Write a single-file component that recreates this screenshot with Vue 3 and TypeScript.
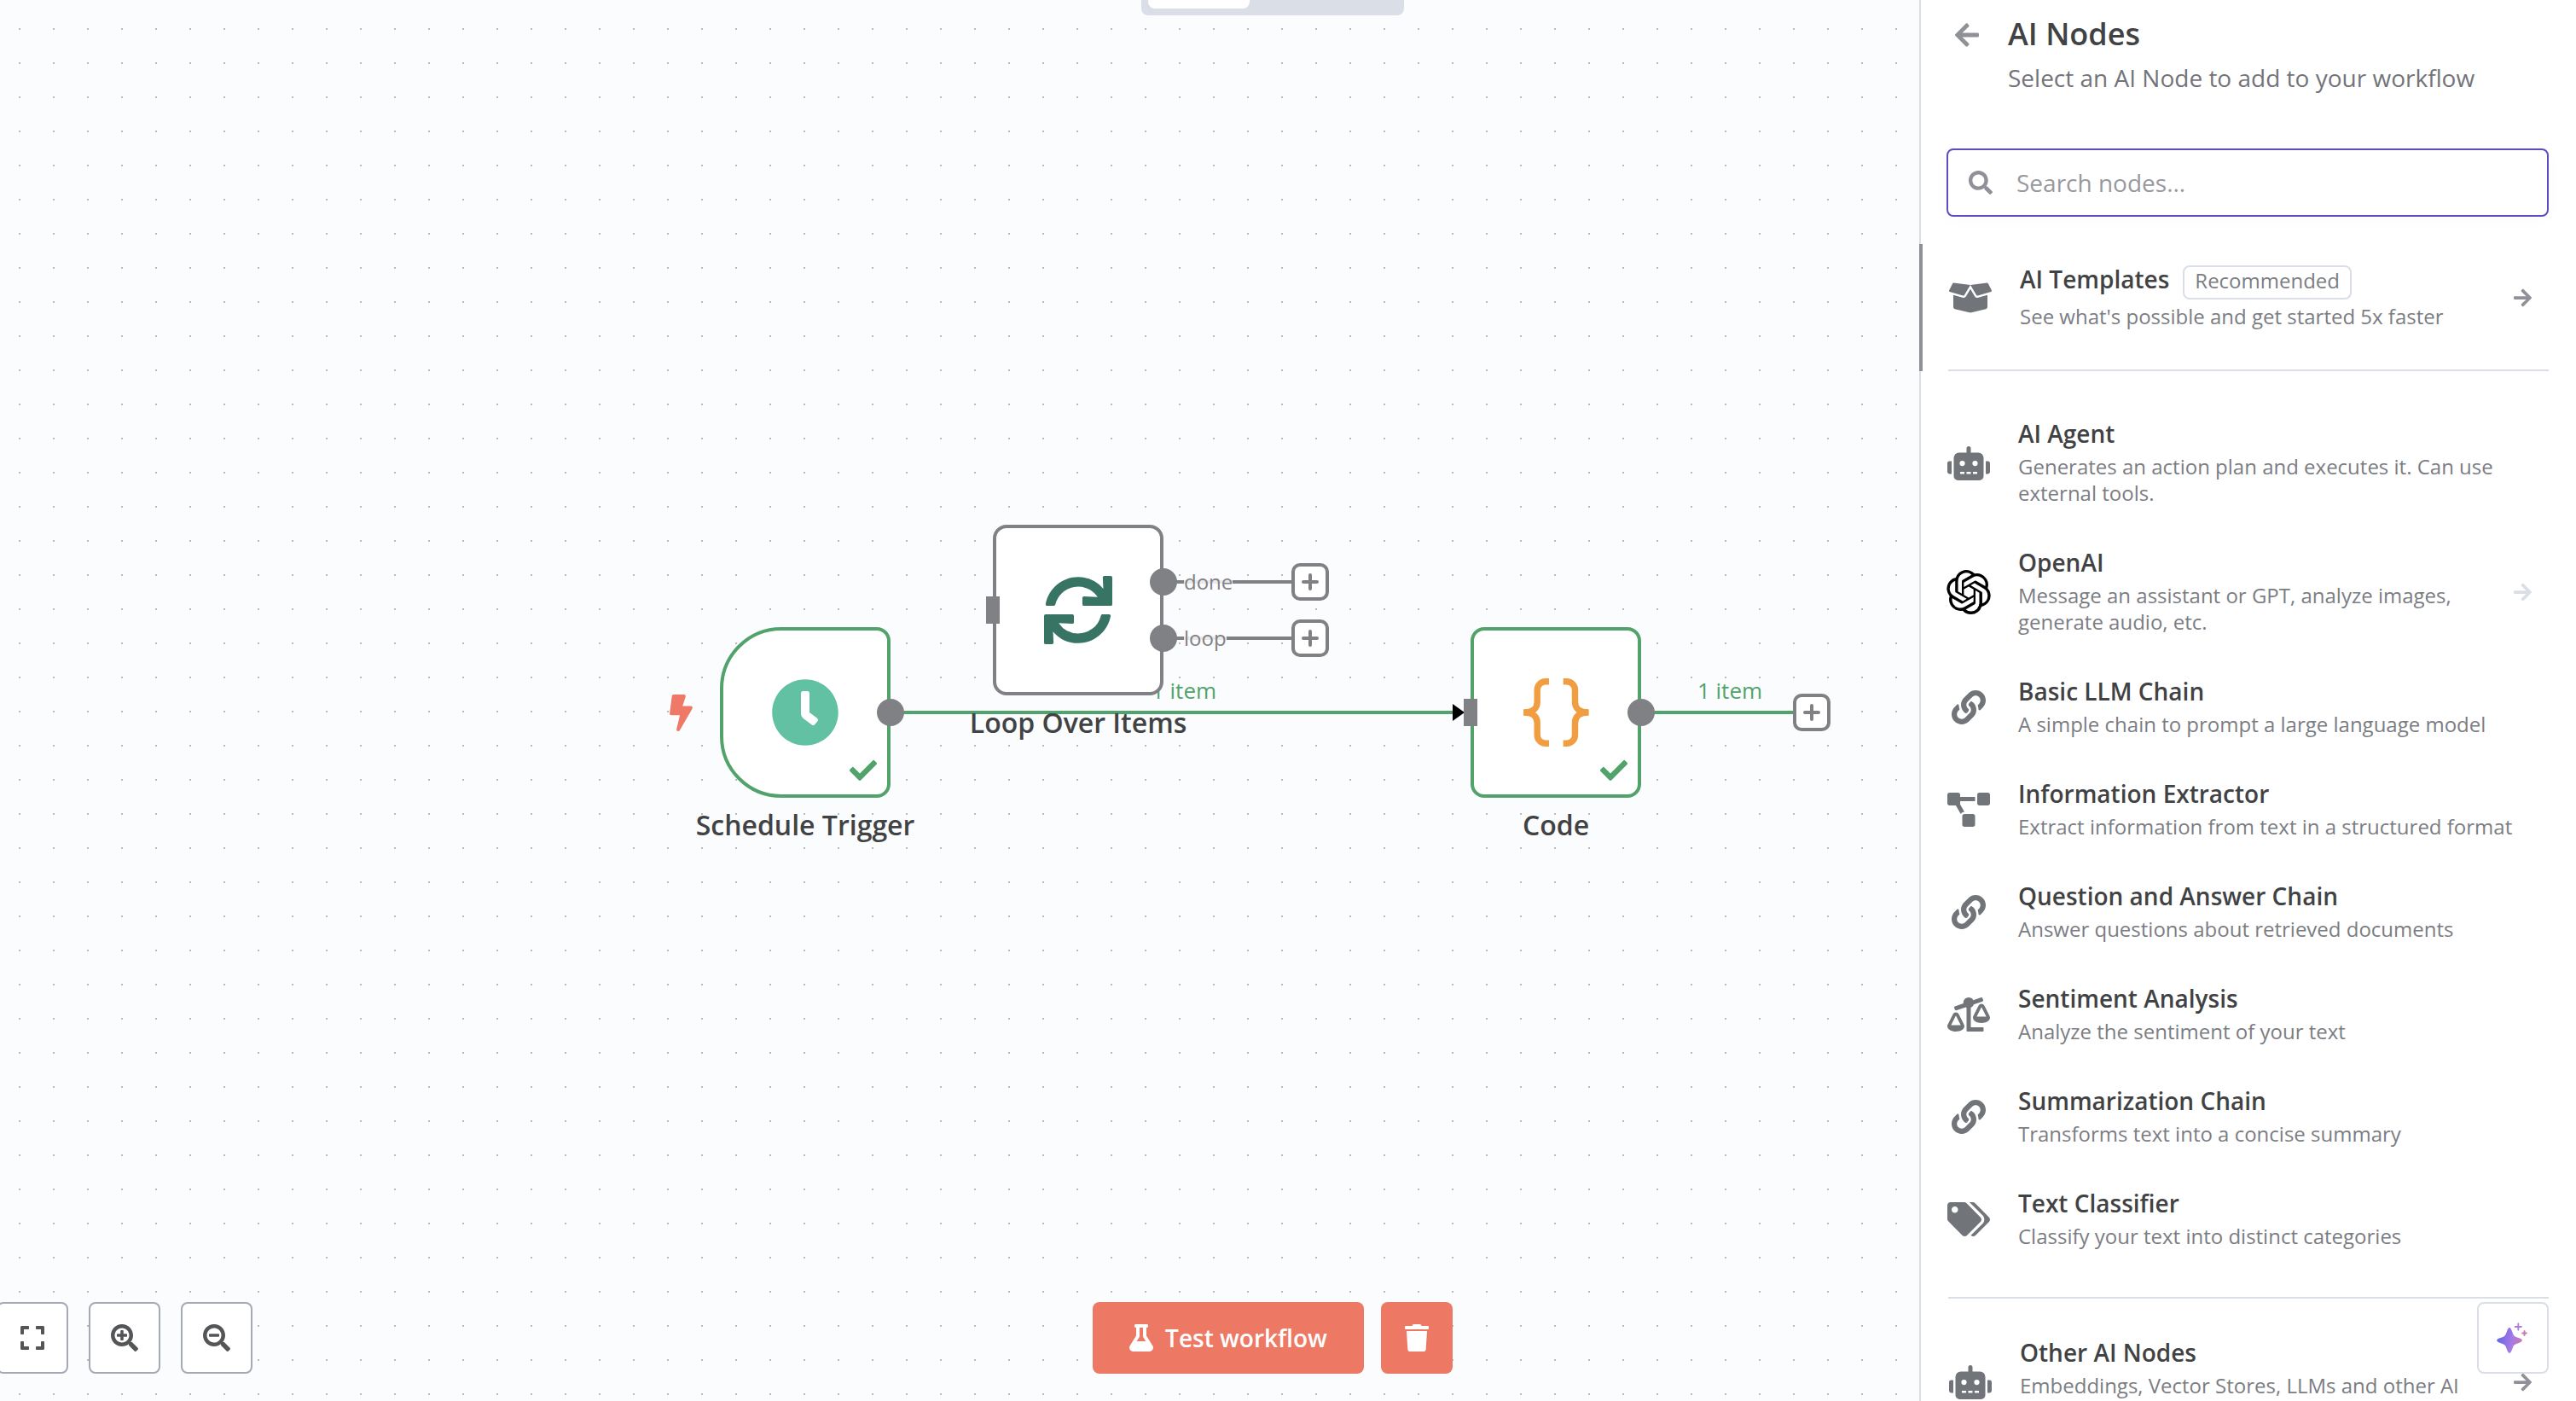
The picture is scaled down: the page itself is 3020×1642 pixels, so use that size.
<script setup lang="ts">
import { ref } from 'vue'

interface Glyph {
  box: string
  d: string
}

interface NodeItem {
  name: string
  text: string
  icon: string
  arrow?: boolean
}

interface FlowNode {
  name: string
  icon: string
  x: number
  y: number
  done: boolean
  trigger?: boolean
  input?: boolean
  outputs: number[]
}

interface AddButton {
  x: number
  y: number
  title: string
}

const glyphs: Record<string, Glyph> = {
  sync: {
    box: '0 0 512 512',
    d: 'M440.65 12.57l4 82.77A247.16 247.16 0 0 0 255.83 8C134.73 8 33.91 94.92 12.29 209.82A12 12 0 0 0 24.09 224h49.05a12 12 0 0 0 11.67-9.26 175.91 175.91 0 0 1 317-56.94l-101.46-4.86a12 12 0 0 0-12.57 12v47.41a12 12 0 0 0 12 12H500a12 12 0 0 0 12-12V12a12 12 0 0 0-12-12h-47.37a12 12 0 0 0-11.98 12.57zM255.83 432a175.61 175.61 0 0 1-146-77.8l101.8 4.87a12 12 0 0 0 12.57-12v-47.4a12 12 0 0 0-12-12H12a12 12 0 0 0-12 12V500a12 12 0 0 0 12 12h47.35a12 12 0 0 0 12-12.6l-4.15-82.57A247.17 247.17 0 0 0 255.83 504c121.11 0 221.93-86.92 243.55-201.82a12 12 0 0 0-11.8-14.18h-49.05a12 12 0 0 0-11.67 9.26A175.86 175.86 0 0 1 255.83 432z',
  },
  clock: {
    box: '0 0 512 512',
    d: 'M256,8C119,8,8,119,8,256S119,504,256,504,504,393,504,256,393,8,256,8Zm92.49,313h0l-20,25a16,16,0,0,1-22.49,2.5h0l-67-49.72a40,40,0,0,1-15-31.23V112a16,16,0,0,1,16-16h32a16,16,0,0,1,16,16V256l58,42.5A16,16,0,0,1,348.49,321Z',
  },
  check: {
    box: '0 0 512 512',
    d: 'M173.898 439.404l-166.4-166.4c-9.997-9.997-9.997-26.206 0-36.204l36.203-36.204c9.997-9.998 26.207-9.998 36.204 0L192 312.69 432.095 72.596c9.997-9.997 26.207-9.997 36.204 0l36.203 36.204c9.997 9.997 9.997 26.206 0 36.204l-294.4 294.401c-9.998 9.997-26.207 9.997-36.204-.001z',
  },
  bolt: {
    box: '0 0 320 512',
    d: 'M296 160H180.6l42.6-129.8C227.2 15 215.7 0 200 0H56C44 0 33.8 8.9 32.2 20.8l-32 240C-1.7 275.2 9.5 288 24 288h118.7L96.6 482.5c-3.6 15.2 8 29.5 23.3 29.5 8.4 0 16.4-4.4 20.8-12l176-304c9.3-15.9-2.2-36-20.7-36z',
  },
  search: {
    box: '0 0 512 512',
    d: 'M505 442.7L405.3 343c-4.5-4.5-10.6-7-17-7H372c27.6-35.3 44-79.7 44-128C416 93.1 322.9 0 208 0S0 93.1 0 208s93.1 208 208 208c48.3 0 92.7-16.4 128-44v16.3c0 6.4 2.5 12.5 7 17l99.7 99.7c9.4 9.4 24.6 9.4 33.9 0l28.3-28.3c9.4-9.4 9.4-24.6.1-34zM208 336c-70.7 0-128-57.2-128-128 0-70.7 57.2-128 128-128 70.7 0 128 57.2 128 128 0 70.7-57.2 128-128 128z',
  },
  zoomIn: {
    box: '0 0 512 512',
    d: 'M304 192v32c0 6.6-5.4 12-12 12h-56v56c0 6.6-5.4 12-12 12h-32c-6.6 0-12-5.4-12-12v-56h-56c-6.6 0-12-5.4-12-12v-32c0-6.6 5.4-12 12-12h56v-56c0-6.6 5.4-12 12-12h32c6.6 0 12 5.4 12 12v56h56c6.6 0 12 5.4 12 12zm201 284.7L476.7 505c-9.4 9.4-24.6 9.4-33.9 0L343 405.3c-4.5-4.5-7-10.6-7-17V372c-35.3 27.6-79.7 44-128 44C93.1 416 0 322.9 0 208S93.1 0 208 0s208 93.1 208 208c0 48.3-16.4 92.7-44 128h16.3c6.4 0 12.5 2.5 17 7l99.7 99.7c9.3 9.4 9.3 24.6 0 34zM344 208c0-75.2-60.8-136-136-136S72 132.8 72 208s60.8 136 136 136 136-60.8 136-136z',
  },
  zoomOut: {
    box: '0 0 512 512',
    d: 'M304 192v32c0 6.6-5.4 12-12 12H124c-6.6 0-12-5.4-12-12v-32c0-6.6 5.4-12 12-12h168c6.6 0 12 5.4 12 12zm201 284.7L476.7 505c-9.4 9.4-24.6 9.4-33.9 0L343 405.3c-4.5-4.5-7-10.6-7-17V372c-35.3 27.6-79.7 44-128 44C93.1 416 0 322.9 0 208S93.1 0 208 0s208 93.1 208 208c0 48.3-16.4 92.7-44 128h16.3c6.4 0 12.5 2.5 17 7l99.7 99.7c9.3 9.4 9.3 24.6 0 34zM344 208c0-75.2-60.8-136-136-136S72 132.8 72 208s60.8 136 136 136 136-60.8 136-136z',
  },
  expand: {
    box: '0 0 448 512',
    d: 'M0 180V56c0-13.3 10.7-24 24-24h124c6.6 0 12 5.4 12 12v40c0 6.6-5.4 12-12 12H64v84c0 6.6-5.4 12-12 12H12c-6.6 0-12-5.4-12-12zM288 44v40c0 6.6 5.4 12 12 12h84v84c0 6.6 5.4 12 12 12h40c6.6 0 12-5.4 12-12V56c0-13.3-10.7-24-24-24H300c-6.6 0-12 5.4-12 12zm148 276h-40c-6.6 0-12 5.4-12 12v84h-84c-6.6 0-12 5.4-12 12v40c0 6.6 5.4 12 12 12h124c13.3 0 24-10.7 24-24V332c0-6.6-5.4-12-12-12zM160 468v-40c0-6.6-5.4-12-12-12H64v-84c0-6.6-5.4-12-12-12H12c-6.6 0-12 5.4-12 12v124c0 13.3 10.7 24 24 24h124c6.6 0 12-5.4 12-12z',
  },
  flask: {
    box: '0 0 448 512',
    d: 'M437.2 403.5L320 215V64h8c13.3 0 24-10.7 24-24V24c0-13.3-10.7-24-24-24H120c-13.3 0-24 10.7-24 24v16c0 13.3 10.7 24 24 24h8v151L10.8 403.5C-18.5 450.6 15.3 512 70.9 512h306.2c55.7 0 89.4-61.5 60.1-108.5zM137.9 320l48.2-77.6c3.7-5.2 5.8-11.6 5.8-18.4V64h64v160c0 6.9 2.2 13.2 5.8 18.4l48.2 77.6h-172z',
  },
  trash: {
    box: '0 0 448 512',
    d: 'M432 32H312l-9.4-18.7A24 24 0 0 0 281.1 0H166.8a23.72 23.72 0 0 0-21.4 13.3L136 32H16A16 16 0 0 0 0 48v32a16 16 0 0 0 16 16h416a16 16 0 0 0 16-16V48a16 16 0 0 0-16-16zM53.2 467a48 48 0 0 0 47.9 45h245.8a48 48 0 0 0 47.9-45L416 128H32z',
  },
  arrowLeft: {
    box: '0 0 448 512',
    d: 'M257.5 445.1l-22.2 22.2c-9.4 9.4-24.6 9.4-33.9 0L7 273c-9.4-9.4-9.4-24.6 0-33.9L201.4 44.7c9.4-9.4 24.6-9.4 33.9 0l22.2 22.2c9.5 9.5 9.3 25-.4 34.3L136.6 216H424c13.3 0 24 10.7 24 24v32c0 13.3-10.7 24-24 24H136.6l120.5 114.8c9.8 9.3 10 24.8.4 34.3z',
  },
  arrowRight: {
    box: '0 0 448 512',
    d: 'M190.5 66.9l22.2-22.2c9.4-9.4 24.6-9.4 33.9 0L441 239c9.4 9.4 9.4 24.6 0 33.9L246.6 467.3c-9.4 9.4-24.6 9.4-33.9 0l-22.2-22.2c-9.5-9.5-9.3-25 .4-34.3L311.4 296H24c-13.3 0-24-10.7-24-24v-32c0-13.3 10.7-24 24-24h287.4L190.9 101.2c-9.8-9.3-10-24.8-.4-34.3z',
  },
  link: {
    box: '0 0 512 512',
    d: 'M326.612 185.391c59.747 59.809 58.927 155.698.36 214.59-.11.12-.24.25-.36.37l-67.2 67.2c-59.27 59.27-155.699 59.262-214.96 0-59.27-59.26-59.27-155.7 0-214.96l37.106-37.106c9.84-9.84 26.786-3.3 27.294 10.606.648 17.722 3.826 35.527 9.69 52.721 1.986 5.822.567 12.262-3.783 16.612l-13.087 13.087c-28.026 28.026-28.905 73.66-1.155 101.96 28.024 28.579 74.086 28.749 102.325.51l67.2-67.19c28.191-28.191 28.073-73.757 0-101.83-3.701-3.694-7.429-6.564-10.341-8.569a16.037 16.037 0 0 1-6.947-12.606c-.396-10.567 3.348-21.456 11.698-29.806l21.054-21.055c5.521-5.521 14.182-6.199 20.584-1.731a152.482 152.482 0 0 1 20.522 17.197zM467.547 44.449c-59.261-59.262-155.69-59.27-214.96 0l-67.2 67.2c-.12.12-.25.25-.36.37-58.566 58.892-59.387 154.781.36 214.59a152.454 152.454 0 0 0 20.521 17.196c6.402 4.468 15.064 3.789 20.584-1.731l21.054-21.055c8.35-8.35 12.094-19.239 11.698-29.806a16.037 16.037 0 0 0-6.947-12.606c-2.912-2.005-6.64-4.875-10.341-8.569-28.073-28.073-28.191-73.639 0-101.83l67.2-67.19c28.239-28.239 74.3-28.069 102.325.51 27.75 28.3 26.872 73.934-1.155 101.96l-13.087 13.087c-4.35 4.35-5.769 10.79-3.783 16.612 5.864 17.194 9.042 34.999 9.69 52.721.509 13.906 17.454 20.446 27.294 10.606l37.106-37.106c59.271-59.259 59.271-155.699.001-214.959z',
  },
  diagram: {
    box: '0 0 640 512',
    d: 'M384 320H256c-17.67 0-32 14.33-32 32v128c0 17.67 14.33 32 32 32h128c17.67 0 32-14.33 32-32V352c0-17.67-14.33-32-32-32zM192 32c0-17.67-14.33-32-32-32H32C14.33 0 0 14.33 0 32v128c0 17.67 14.33 32 32 32h95.72l73.16 128.04C211.98 300.98 232.4 288 256 288h.28L192 175.51V128h224V64H192V32zM608 0H480c-17.67 0-32 14.33-32 32v128c0 17.67 14.33 32 32 32h128c17.67 0 32-14.33 32-32V32c0-17.67-14.33-32-32-32z',
  },
  tags: {
    box: '0 0 640 512',
    d: 'M497.941 225.941L286.059 14.059A48 48 0 0 0 252.118 0H48C21.49 0 0 21.49 0 48v204.118a48 48 0 0 0 14.059 33.941l211.882 211.882c18.744 18.745 49.136 18.746 67.882 0l204.118-204.118c18.745-18.745 18.745-49.137 0-67.882zM112 160c-26.51 0-48-21.49-48-48s21.49-48 48-48 48 21.49 48 48-21.49 48-48 48zm513.941 133.823L421.823 497.941c-18.745 18.745-49.137 18.745-67.882 0l-.36-.36L527.64 323.522c16.999-16.999 26.362-39.609 26.362-63.64s-9.363-46.641-26.362-63.64L331.397 0h48.721a48 48 0 0 1 33.941 14.059l211.882 211.882c18.745 18.745 18.745 49.137 0 67.882z',
  },
  scale: {
    box: '0 0 640 512',
    d: 'M528 448H352V153.25c20.42-8.94 36.1-26.22 43.38-47.47l132-44.26c8.38-2.81 12.89-11.88 10.08-20.26l-10.17-30.34C524.48 2.54 515.41-1.97 507.03.84L389.11 40.37C375.3 16.36 349.69 0 320 0c-44.18 0-80 35.82-80 80 0 3.43.59 6.71 1.01 10.03l-128.39 43.05c-8.38 2.81-12.89 11.88-10.08 20.26l10.17 30.34c2.81 8.38 11.88 12.89 20.26 10.08l142.05-47.63c4.07 2.77 8.43 5.12 12.99 7.12V496c0 8.84 7.16 16 16 16h224c8.84 0 16-7.16 16-16v-32c-.01-8.84-7.17-16-16.01-16zm111.98-144c0-16.18 1.34-8.73-85.05-181.51-17.65-35.29-68.19-35.36-85.87 0-87.12 174.26-85.04 165.84-85.04 181.51H384c0 44.18 57.3 80 128 80s128-35.82 128-80h-.02zM440 288l72-144 72 144H440zm-269.07-37.51c-17.65-35.29-68.19-35.36-85.87 0C-2.06 424.75.02 416.33.02 432H0c0 44.18 57.3 80 128 80s128-35.82 128-80h-.02c0-16.18 1.34-8.73-85.05-181.51zM56 416l72-144 72 144H56z',
  },
  robot: {
    box: '0 0 640 512',
    d: 'M32,224H64V416H32A31.96166,31.96166,0,0,1,0,384V256A31.96166,31.96166,0,0,1,32,224Zm512-48V448a64.06328,64.06328,0,0,1-64,64H160a64.06328,64.06328,0,0,1-64-64V176a79.974,79.974,0,0,1,80-80H288V32a32,32,0,0,1,64,0V96H464A79.974,79.974,0,0,1,544,176ZM264,256a40,40,0,1,0-40,40A39.997,39.997,0,0,0,264,256Zm-8,128H192v32h64Zm96,0H288v32h64ZM456,256a40,40,0,1,0-40,40A39.997,39.997,0,0,0,456,256Zm-8,128H384v32h64ZM640,256V384a31.96166,31.96166,0,0,1-32,32H576V224h32A31.96166,31.96166,0,0,1,640,256Z',
  },
  boxOpen: {
    box: '0 0 640 512',
    d: 'M425.7 256c-16.9 0-32.8-9-41.4-23.4L320 126l-64.2 106.6c-8.7 14.5-24.6 23.5-41.5 23.5-4.5 0-9-.6-13.3-1.9L64 215v178c0 14.7 10 27.5 24.2 31l216.2 54.1c10.2 2.5 20.9 2.5 31 0L551.8 424c14.2-3.6 24.2-16.4 24.2-31V215l-137 39.1c-4.3 1.3-8.8 1.9-13.3 1.9zm212.6-112.2L586.8 41c-3.1-6.2-9.8-9.8-16.7-8.9L320 64l91.7 152.1c3.8 6.3 11.4 9.3 18.5 7.3l197.9-56.5c9.9-2.9 14.7-13.9 10.2-23.1zM53.2 41L1.7 143.8c-4.6 9.2.3 20.2 10.1 23l197.9 56.5c7.1 2 14.7-1 18.5-7.3L320 64 69.8 32.1c-6.9-.8-13.5 2.7-16.6 8.9z',
  },
  openai: {
    box: '0 0 24 24',
    d: 'M22.2819 9.8211a5.9847 5.9847 0 0 0-.5157-4.9108 6.0462 6.0462 0 0 0-6.5098-2.9A6.0651 6.0651 0 0 0 4.9807 4.1818a5.9847 5.9847 0 0 0-3.9977 2.9 6.0462 6.0462 0 0 0 .7427 7.0966 5.98 5.98 0 0 0 .511 4.9107 6.051 6.051 0 0 0 6.5146 2.9001A5.9847 5.9847 0 0 0 13.2599 24a6.0557 6.0557 0 0 0 5.7718-4.2058 5.9894 5.9894 0 0 0 3.9977-2.9001 6.0557 6.0557 0 0 0-.7475-7.0729zm-9.022 12.6081a4.4755 4.4755 0 0 1-2.8764-1.0408l.1419-.0804 4.7783-2.7582a.7948.7948 0 0 0 .3927-.6813v-6.7369l2.02 1.1686a.071.071 0 0 1 .038.052v5.5826a4.504 4.504 0 0 1-4.4945 4.4944zm-9.6607-4.1254a4.4708 4.4708 0 0 1-.5346-3.0137l.142.0852 4.783 2.7582a.7712.7712 0 0 0 .7806 0l5.8428-3.3685v2.3324a.0804.0804 0 0 1-.0332.0615L9.74 19.9502a4.4992 4.4992 0 0 1-6.1408-1.6464zM2.3408 7.8956a4.485 4.485 0 0 1 2.3655-1.9728V11.6a.7664.7664 0 0 0 .3879.6765l5.8144 3.3543-2.0201 1.1685a.0757.0757 0 0 1-.071 0l-4.8303-2.7865A4.504 4.504 0 0 1 2.3408 7.872zm16.5963 3.8558L13.1038 8.364 15.1192 7.2a.0757.0757 0 0 1 .071 0l4.8303 2.7913a4.4944 4.4944 0 0 1-.6765 8.1042v-5.6772a.79.79 0 0 0-.407-.667zm2.0107-3.0231l-.142-.0852-4.7735-2.7818a.7759.7759 0 0 0-.7854 0L9.409 9.2297V6.8974a.0662.0662 0 0 1 .0284-.0615l4.8303-2.7866a4.4992 4.4992 0 0 1 6.6802 4.66zM8.3065 12.863l-2.02-1.1638a.0804.0804 0 0 1-.038-.0567V6.0742a4.4992 4.4992 0 0 1 7.3757-3.4537l-.142.0805L8.704 5.459a.7948.7948 0 0 0-.3927.6813zm1.0976-2.3654l2.602-1.4998 2.6069 1.4998v2.9994l-2.5974 1.4997-2.6067-1.4997Z',
  },
}

const query = ref('')

const items: NodeItem[] = [
  { name: 'AI Agent', text: 'Generates an action plan and executes it. Can use external tools.', icon: 'robot' },
  { name: 'OpenAI', text: 'Message an assistant or GPT, analyze images, generate audio, etc.', icon: 'openai', arrow: true },
  { name: 'Basic LLM Chain', text: 'A simple chain to prompt a large language model', icon: 'link' },
  { name: 'Information Extractor', text: 'Extract information from text in a structured format', icon: 'diagram' },
  { name: 'Question and Answer Chain', text: 'Answer questions about retrieved documents', icon: 'link' },
  { name: 'Sentiment Analysis', text: 'Analyze the sentiment of your text', icon: 'scale' },
  { name: 'Summarization Chain', text: 'Transforms text into a concise summary', icon: 'link' },
  { name: 'Text Classifier', text: 'Classify your text into distinct categories', icon: 'tags' },
]

const nodes: FlowNode[] = [
  { name: 'Schedule Trigger', icon: 'clock', x: 844, y: 735, done: true, trigger: true, outputs: [100] },
  { name: 'Loop Over Items', icon: 'sync', x: 1164, y: 615, done: false, input: true, outputs: [67, 133] },
  { name: 'Code', icon: 'braces', x: 1724, y: 735, done: true, input: true, outputs: [100] },
]

const addButtons: AddButton[] = [
  { x: 1514, y: 660, title: 'Add node after done' },
  { x: 1514, y: 726, title: 'Add node after loop' },
  { x: 2102, y: 813, title: 'Add node after Code' },
]

const outputLabels = [
  { text: 'done', x: 1388, y: 682 },
  { text: 'loop', x: 1388, y: 748 },
]

const edgeLabels = [
  { text: '1 item', x: 1388, y: 809 },
  { text: '1 item', x: 2028, y: 809 },
]

const zoomControls = [
  { icon: 'expand', title: 'Fit to view' },
  { icon: 'zoomIn', title: 'Zoom in' },
  { icon: 'zoomOut', title: 'Zoom out' },
]

const at = (x: number, y: number) => ({ left: `${x}px`, top: `${y}px` })
</script>

<template>
  <div class="editor">
    <main class="canvas">
      <div class="tabs"><span class="tab-active"></span></div>

      <svg class="edges" aria-hidden="true">
        <g fill="none" stroke-width="4">
          <path class="edge-ok" d="M1044 835H1706" />
          <path class="edge-ok" d="M1924 835H2104" />
          <path class="edge-idle" d="M1364 682H1516" />
          <path class="edge-idle" d="M1364 748H1516" />
        </g>
        <path d="M1703 825L1717 835L1703 845Z" />
      </svg>

      <span v-for="l in edgeLabels" :key="l.x" class="edge-label" :style="at(l.x, l.y)">{{ l.text }}</span>
      <span v-for="l in outputLabels" :key="l.text" class="output-label" :style="at(l.x, l.y)">{{ l.text }}</span>

      <svg class="bolt" :viewBox="glyphs.bolt.box" aria-hidden="true"><path :d="glyphs.bolt.d" /></svg>

      <div v-for="n in nodes" :key="n.name" class="node" :style="at(n.x, n.y)">
        <div class="node-box" :class="{ done: n.done, trigger: n.trigger }">
          <svg v-if="n.icon === 'braces'" class="node-icon braces" viewBox="0 0 80 80" aria-hidden="true">
            <g id="brace">
              <path d="M32 3.8H28A9.7 9.7 0 0 0 18.2 13.5V28C18.2 35 13 40 3 40C13 40 18.2 45 18.2 52V66.5A9.7 9.7 0 0 0 28 76.2H32" />
              <path d="M2 40H10" />
            </g>
            <use href="#brace" transform="translate(80.7 0) scale(-1 1)" />
          </svg>
          <svg v-else class="node-icon" :class="n.icon" :viewBox="glyphs[n.icon].box" aria-hidden="true">
            <path :d="glyphs[n.icon].d" />
          </svg>
          <svg v-if="n.done" class="node-check" :viewBox="glyphs.check.box" aria-hidden="true">
            <path :d="glyphs.check.d" />
          </svg>
          <span v-if="n.input" class="port-in"></span>
          <span v-for="o in n.outputs" :key="o" class="port-out" :style="{ top: `${o}px` }"></span>
        </div>
        <div class="node-name">{{ n.name }}</div>
      </div>

      <button v-for="b in addButtons" :key="b.title" class="add" type="button" :aria-label="b.title" :style="at(b.x, b.y)">
        <svg viewBox="0 0 20 20" aria-hidden="true"><path d="M10 2V18M2 10H18" /></svg>
      </button>

      <div class="zoom-bar">
        <button v-for="z in zoomControls" :key="z.icon" class="square" type="button" :aria-label="z.title">
          <svg class="ctl-icon" :viewBox="glyphs[z.icon].box" aria-hidden="true"><path :d="glyphs[z.icon].d" /></svg>
        </button>
      </div>
    </main>

    <aside class="panel">
      <header class="head">
        <button class="back" type="button" aria-label="Back">
          <svg :viewBox="glyphs.arrowLeft.box" aria-hidden="true"><path :d="glyphs.arrowLeft.d" /></svg>
        </button>
        <div>
          <h1>AI Nodes</h1>
          <p>Select an AI Node to add to your workflow</p>
        </div>
      </header>

      <label class="search">
        <svg :viewBox="glyphs.search.box" aria-hidden="true"><path :d="glyphs.search.d" /></svg>
        <input v-model="query" type="text" placeholder="Search nodes..." aria-label="Search nodes" />
      </label>

      <section class="link-row active">
        <a class="item" href="#templates">
          <span class="item-icon">
            <svg :viewBox="glyphs.boxOpen.box" aria-hidden="true"><path :d="glyphs.boxOpen.d" /></svg>
          </span>
          <span class="item-text">
            <span class="title-row">
              <span class="item-title">AI Templates</span>
              <span class="badge">Recommended</span>
            </span>
            <span class="item-desc">See what's possible and get started 5x faster</span>
          </span>
          <svg class="arrow" :viewBox="glyphs.arrowRight.box" aria-hidden="true"><path :d="glyphs.arrowRight.d" /></svg>
        </a>
      </section>

      <section class="list">
        <a v-for="i in items" :key="i.name" class="item" href="#node">
          <span class="item-icon">
            <svg :class="i.icon" :viewBox="glyphs[i.icon].box" aria-hidden="true"><path :d="glyphs[i.icon].d" /></svg>
          </span>
          <span class="item-text">
            <span class="item-title">{{ i.name }}</span>
            <span class="item-desc">{{ i.text }}</span>
          </span>
          <svg v-if="i.arrow" class="arrow faint" :viewBox="glyphs.arrowRight.box" aria-hidden="true">
            <path :d="glyphs.arrowRight.d" />
          </svg>
        </a>
      </section>

      <section class="link-row other">
        <a class="item" href="#other">
          <span class="item-icon">
            <svg :viewBox="glyphs.robot.box" aria-hidden="true"><path :d="glyphs.robot.d" /></svg>
          </span>
          <span class="item-text">
            <span class="item-title">Other AI Nodes</span>
            <span class="item-desc">Embeddings, Vector Stores, LLMs and other AI nodes</span>
          </span>
          <svg class="arrow" :viewBox="glyphs.arrowRight.box" aria-hidden="true"><path :d="glyphs.arrowRight.d" /></svg>
        </a>
      </section>
    </aside>

    <div class="run-bar">
      <button class="primary" type="button">
        <svg class="ctl-icon" :viewBox="glyphs.flask.box" aria-hidden="true"><path :d="glyphs.flask.d" /></svg>
        Test workflow
      </button>
      <button class="primary icon-only" type="button" aria-label="Clear execution data">
        <svg class="ctl-icon" :viewBox="glyphs.trash.box" aria-hidden="true"><path :d="glyphs.trash.d" /></svg>
      </button>
    </div>

    <button class="assistant" type="button" aria-label="AI assistant">
      <svg viewBox="0 0 40 40" aria-hidden="true">
        <defs>
          <linearGradient id="spark" gradientUnits="userSpaceOnUse" x1="1" y1="20" x2="38" y2="28">
            <stop offset="0" stop-color="#6366e4" />
            <stop offset="0.5" stop-color="#a87be6" />
            <stop offset="1" stop-color="#e0788c" />
          </linearGradient>
        </defs>
        <g fill="url(#spark)">
          <path d="M13.8 10.2Q16 6 18.2 10.2L20.4 16Q21.2 17.9 23 18.7L28.8 20.8Q33 23 28.8 25.2L23 27.4Q21.2 28.1 20.4 30L18.2 35.8Q16 40 13.8 35.8L11.6 30Q10.8 28.1 9 27.4L3.2 25.2Q-1 23 3.2 20.8L9 18.7Q10.8 17.9 11.6 16Z" />
          <path d="M25.4 3Q26.3 1.6 27.2 3V6H30.2Q31.8 7 30.2 7.9H27.2V11Q26.3 12.4 25.4 11V7.9H22.4Q20.8 7 22.4 6H25.4Z" />
          <path d="M32.5 11.8Q33.5 10.2 34.5 11.8V13.5H36.2Q37.8 14.5 36.2 15.5H34.5V17.2Q33.5 18.8 32.5 17.2V15.5H30.8Q29.2 14.5 30.8 13.5H32.5Z" />
        </g>
      </svg>
    </button>
  </div>
</template>

<style>
html,
body,
#app {
  height: 100%;
}

body {
  margin: 0;
}
</style>

<style scoped>
* {
  box-sizing: border-box;
}

.editor {
  position: relative;
  display: flex;
  height: 100%;
  overflow: hidden;
  background: #fbfcfe;
  color: #414244;
  font-family: 'Open Sans', 'Noto Sans', sans-serif;
}

button {
  display: flex;
  align-items: center;
  justify-content: center;
  margin: 0;
  padding: 0;
  font: inherit;
  cursor: pointer;
}

svg {
  display: block;
  fill: currentColor;
}

/* Canvas with a dot every 40px */
.canvas {
  position: relative;
  flex: 1;
  min-width: 0;
  overflow: hidden;
  background:
    linear-gradient(to right, transparent 2px, #fbfcfe 2px) 22px 33px / 40px 40px,
    linear-gradient(to bottom, #b9babc 2px, #fbfcfe 2px) 22px 33px / 40px 40px;
}

.tabs {
  position: absolute;
  left: 1338px;
  top: 0;
  display: flex;
  width: 308px;
  height: 18px;
  padding: 0 8px 8px;
  border-radius: 0 0 8px 8px;
  background: #dadee6;
}

.tab-active {
  width: 119px;
  border-radius: 0 0 8px 8px;
  background: #fff;
}

.edges {
  position: absolute;
  inset: 0;
  width: 100%;
  height: 100%;
  fill: #000;
}

.edge-ok {
  stroke: #52a36b;
}

.edge-idle {
  stroke: #808185;
}

.edge-label {
  position: absolute;
  color: #52a36b;
  font-size: 26px;
  line-height: 32px;
  white-space: nowrap;
  transform: translate(-50%, -50%);
}

.output-label {
  position: absolute;
  background: rgba(251, 252, 254, 0.85);
  color: #808185;
  font-size: 24px;
  line-height: 24px;
  transform: translateY(-50%);
}

.bolt {
  position: absolute;
  left: 785px;
  top: 814px;
  width: 27px;
  height: 43px;
  color: #ee7966;
}

.node {
  position: absolute;
  display: flex;
  flex-direction: column;
  align-items: center;
  width: 200px;
}

.node-box {
  position: relative;
  display: flex;
  align-items: center;
  justify-content: center;
  width: 200px;
  height: 200px;
  border: 4px solid #808185;
  border-radius: 16px;
  background: #fff;
}

.node-box.done {
  border-color: #52a36b;
}

.node-box.trigger {
  border-radius: 72px 16px 16px 72px;
}

.node-icon {
  width: 80px;
  height: 80px;
}

.clock {
  color: #62c1a2;
}

.sync {
  color: #377463;
}

.braces {
  fill: none;
  stroke: #f19e43;
  stroke-width: 7.4;
}

.node-check {
  position: absolute;
  right: 12px;
  bottom: 12px;
  width: 32px;
  height: 32px;
  color: #52a36b;
}

.port-in {
  position: absolute;
  left: -12px;
  top: 80px;
  width: 16px;
  height: 32px;
  background: #808185;
}

.port-out {
  position: absolute;
  right: -20px;
  width: 32px;
  height: 32px;
  margin-top: -20px;
  border-radius: 50%;
  background: #808185;
}

.node-name {
  margin-top: 12px;
  font-size: 32px;
  font-weight: 600;
  line-height: 40px;
  white-space: nowrap;
}

.add {
  position: absolute;
  width: 44px;
  height: 44px;
  border: 4px solid #808185;
  border-radius: 10px;
  background: #fff;
  color: #808185;
}

.add svg {
  width: 20px;
  height: 20px;
  overflow: visible;
  stroke: currentColor;
  stroke-width: 4;
  stroke-linecap: round;
}

.zoom-bar {
  position: absolute;
  left: -4px;
  bottom: 32px;
  display: flex;
  gap: 24px;
}

.square {
  width: 84px;
  height: 84px;
  border: 2px solid #a6a8b6;
  border-radius: 8px;
  background: #fff;
  color: #545557;
}

.ctl-icon {
  height: 32px;
}

.run-bar {
  position: absolute;
  left: 0;
  right: 36px;
  bottom: 32px;
  display: flex;
  justify-content: center;
  gap: 20px;
  pointer-events: none;
}

.primary {
  gap: 14px;
  height: 84px;
  padding: 0 43px;
  border: 0;
  border-radius: 8px;
  background: #ed7964;
  color: #fff;
  font-size: 28px;
  font-weight: 600;
  pointer-events: auto;
}

.icon-only {
  width: 84px;
  padding: 0;
}

/* Node creator panel */
.panel {
  flex: none;
  width: 770px;
  padding: 0 32px 0 30px;
  border-left: 2px solid #dadee7;
  background: #fff;
}

.head {
  display: flex;
  gap: 34px;
  height: 174px;
  padding: 16px 0 0 10px;
}

.back {
  width: 28px;
  height: 50px;
  border: 0;
  background: none;
  color: #909198;
}

.back svg {
  width: 28px;
  height: 32px;
}

h1,
p {
  margin: 0;
}

h1 {
  font-size: 36px;
  font-weight: 600;
  line-height: 48px;
}

p {
  margin-top: 8px;
  color: #727479;
  font-size: 28px;
  line-height: 38px;
}

.search {
  display: flex;
  align-items: center;
  gap: 28px;
  height: 80px;
  padding: 0 24px;
  border: 2px solid #5b4dbd;
  border-radius: 8px;
  background: #fff;
  box-shadow: 0 4px 24px rgba(0, 0, 0, 0.02);
}

.search svg {
  width: 28px;
  height: 28px;
  color: #909198;
}

.search input {
  flex: 1;
  min-width: 0;
  height: 38px;
  padding: 0;
  border: 0;
  outline: 0;
  background: none;
  color: #414244;
  font: inherit;
  font-size: 28px;
}

.search input::placeholder {
  color: #98999d;
  opacity: 1;
}

.item {
  display: flex;
  align-items: center;
  gap: 32px;
  padding: 24px 0 20px;
  color: #414244;
  text-decoration: none;
}

.link-row {
  position: relative;
  margin-left: 2px;
}

.active {
  margin-top: 32px;
  height: 149px;
  border-bottom: 2px solid #dadee7;
}

.active .item {
  padding-top: 22px;
}

.active::before {
  content: '';
  position: absolute;
  left: -34px;
  top: 0;
  bottom: -2px;
  width: 4px;
  background: #8f9097;
}

.list {
  padding: 30px 0 33px;
}

.other {
  padding-top: 20px;
  border-top: 2px solid #dadee7;
}

.item-icon {
  display: flex;
  flex: none;
  justify-content: center;
  width: 52px;
  color: #717479;
}

.item-icon svg {
  height: 40px;
}

.item-icon .openai {
  width: 52px;
  height: 52px;
  color: #000;
}

.item-text {
  display: flex;
  flex: 1;
  flex-direction: column;
  gap: 4px;
  min-width: 0;
  padding-bottom: 3px;
}

.title-row {
  display: flex;
  align-items: baseline;
  gap: 16px;
}

.item-title {
  font-size: 28px;
  font-weight: 600;
  line-height: 38px;
}

.badge {
  padding: 0 12px 4px;
  border: 2px solid #dadee7;
  border-radius: 8px;
  color: #7b7d83;
  font-size: 24px;
  line-height: 32px;
}

.item-desc {
  color: #7b7d83;
  font-size: 24px;
  line-height: 31px;
}

.arrow {
  flex: none;
  width: 21px;
  height: 24px;
  margin: 0 20px 0 -24px;
  color: #909198;
}

.faint {
  color: #dadee7;
}

.assistant {
  position: absolute;
  right: 32px;
  bottom: 32px;
  width: 84px;
  height: 84px;
  border: 2px solid #dadee7;
  border-radius: 8px;
  background: #fff;
}

.assistant svg {
  width: 40px;
  height: 40px;
}
</style>
